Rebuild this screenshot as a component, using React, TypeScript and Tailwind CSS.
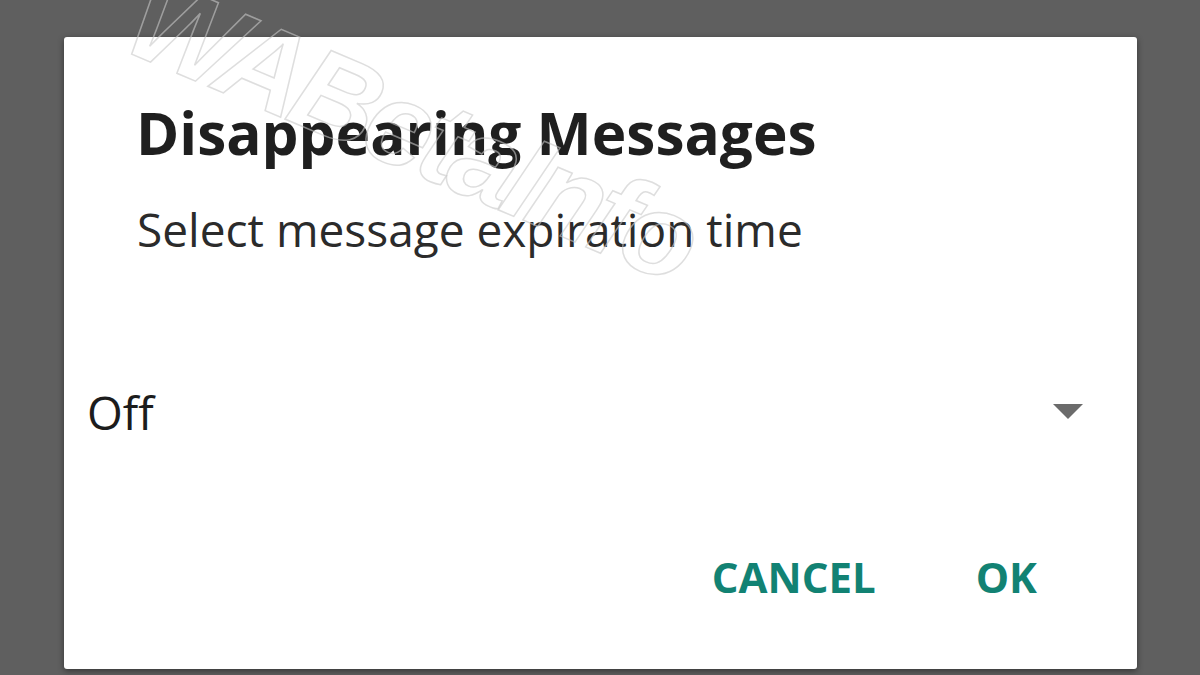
export default function App() {
  return (
    <div
      className="relative h-[675px] w-[1200px] overflow-hidden bg-[#5f5f5f] pl-[64px] pt-[37px]"
      style={{ fontFamily: "'Open Sans', Lato, sans-serif" }}
    >
      <div className="flex h-[632px] w-[1073px] flex-col rounded-[3px] bg-white shadow-[0_2px_6px_rgba(0,0,0,0.45)]">
        <h1 className="pl-[72px] pt-[66px] text-[58.5px] font-bold leading-[58px] text-[#1f1f1f]">
          Disappearing Messages
        </h1>
        <p className="mt-[45px] pl-[73px] text-[46px] leading-[46px] text-[#2b2b2b]">
          Select message expiration time
        </p>
        <div className="mt-[137px] flex items-center justify-between pl-[23px] pr-[54px]">
          <span className="text-[46px] leading-[46px] text-[#1c1c1c]">Off</span>
          <svg width="30" height="16" viewBox="0 0 30 16">
            <path d="M0 0 L30 0 L15 15 Z" fill="#6b6b6b" />
          </svg>
        </div>
        <div className="mt-[121px] flex justify-end gap-[100px] pr-[100px]">
          <span className="text-[42px] font-bold leading-[42px] text-[#128273]">CANCEL</span>
          <span className="text-[42px] font-bold leading-[42px] text-[#128273]">OK</span>
        </div>
      </div>
      {/* brand watermark */}
      <div
        className="pointer-events-none absolute left-[135px] top-[-48px] origin-left rotate-[23deg] select-none text-[118px] font-bold italic leading-none tracking-[-6px] text-transparent"
        style={{ WebkitTextStroke: "1.5px rgba(200,200,200,0.6)", fontFamily: "'Liberation Sans', sans-serif" }}
      >
        WABetaInfo
      </div>
    </div>
  );
}
